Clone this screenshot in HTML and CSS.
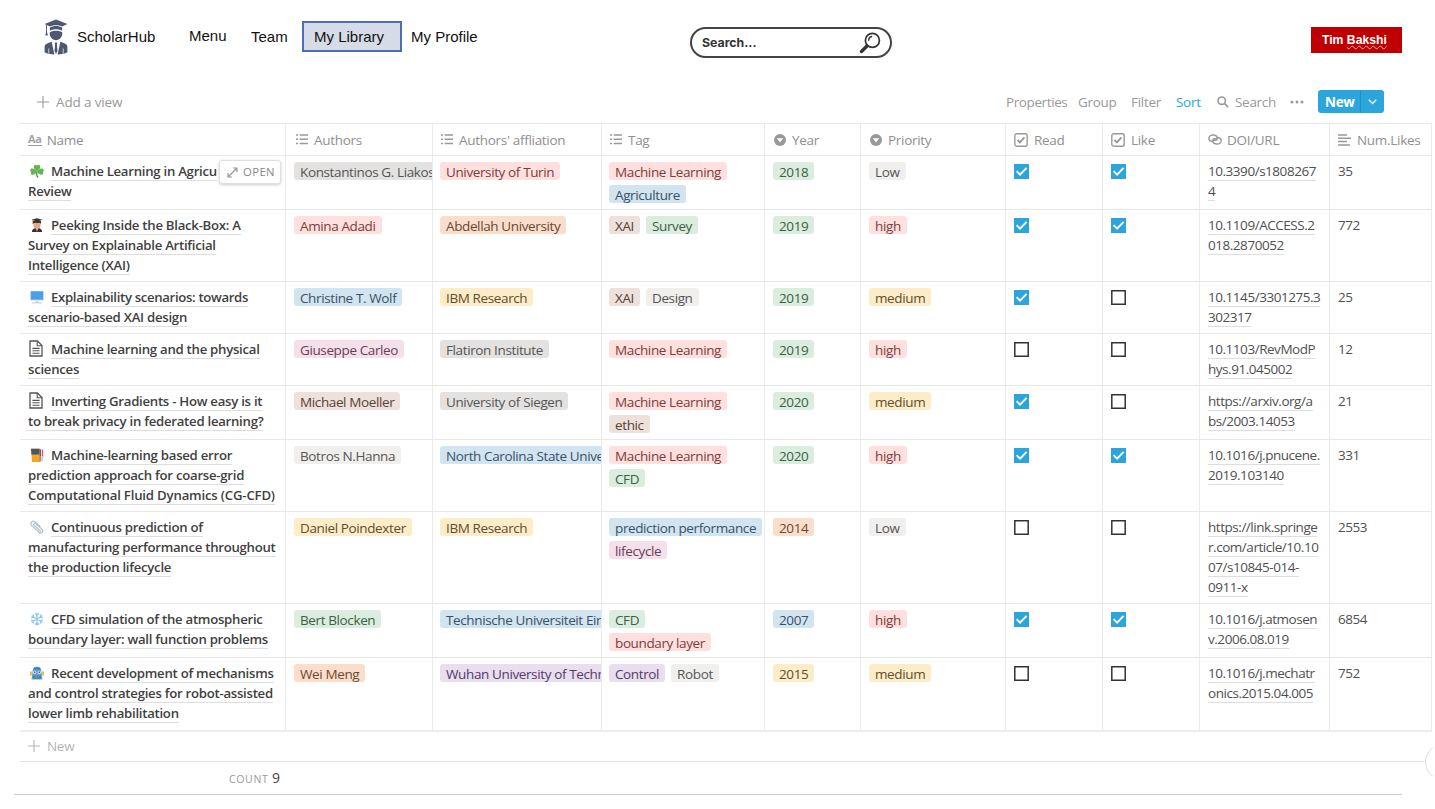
FILE: index.html
```html
<!DOCTYPE html>
<html lang="en">
<head>
<meta charset="utf-8">
<title>ScholarHub - My Library</title>
<link rel="stylesheet" href="styles.css">
</head>
<body>
<svg class="defs" width="0" height="0">
  <symbol id="list" viewBox="0 0 12 11"><path d="M0 1h2M0 5.3h2M0 9.6h2M3.6 1H12M3.6 5.3H12M3.6 9.6H12" stroke="currentColor" stroke-width="1.5" fill="none"/></symbol>
  <symbol id="select" viewBox="0 0 12 12"><circle cx="6" cy="6" r="6" fill="currentColor"/><path d="M2.8 4.2h6.4L6 8.600z" fill="#fff"/></symbol>
  <symbol id="check" viewBox="0 0 14 14"><rect x=".8" y=".8" width="12.4" height="12.4" rx="2" fill="none" stroke="currentColor" stroke-width="1.4"/><path d="M3.6 7l2.3 2.3 4.5-5" fill="none" stroke="currentColor" stroke-width="1.9"/></symbol>
  <symbol id="on" viewBox="0 0 15 15"><path d="M0 0h15v15H0z" fill="#2ca5dc"/><path d="M2.600 7.200l3.500 3.500 6.500-6.900" fill="none" stroke="#fff" stroke-width="1.9"/></symbol>
  <symbol id="off" viewBox="0 0 15 15"><path d="M.8.8h13.400v13.400H.8z" fill="#fff" stroke="#333" stroke-width="1.5"/></symbol>
  <symbol id="plus" viewBox="0 0 12 12"><path d="M6 0v12M0 6h12" stroke="currentColor" stroke-width="1.1"/></symbol>
  <symbol id="doc" viewBox="0 0 14 17"><path d="M1 1h7.400L13 5.600V16H1z" fill="#fff" stroke="#555" stroke-width="1.3"/><path d="M8.200 1v4.800H13M3.400 8.400h7.200M3.400 10.800h7.200M3.400 13.200h7.200" fill="none" stroke="#555" stroke-width="1.1"/></symbol>
</svg>

<header class="top">
  <div class="brand">
    <svg class="logo" viewBox="0 0 24 36" fill="#4d5870"><path d="M12 .5l11.500 4.600L18 7.400c-3.500-1.700-8.500-1.700-12 0L.5 5.100z"/><path d="M5.800 8.500c3.500-2.100 8.900-2.100 12.400 0v3.200c-3.500-2-8.900-2-12.400 0z"/><path d="M2.100 5.800l.9.400V13l.9 3.500H1.300L2.100 13zM5.800 13.200c3.500-2 8.900-2 12.400 0 .7 4-2.400 8-6.200 8s-6.900-4-6.200-8z"/><path d="M7.600 22.600L10.400 35.500C6.400 35.300 3 34.600.6 33.200V28c0-3 3.400-3.600 7-5.400zM16.400 22.600L13.600 35.500c4-.2 7.400-.9 9.800-2.300V28c0-3-3.400-3.600-7-5.400zM10.700 23.600h2.600l-.4 2 .6 6.500-1.500 3-1.500-3 .6-6.500z"/><path d="M4.800 29.500v5M19.200 29.500v5" stroke="#fff" stroke-width=".7"/></svg>
    <span>ScholarHub</span>
  </div>
  <nav class="nav">
    <a class="menu">Menu</a><a class="team">Team</a><a class="current">My Library</a><a>My Profile</a>
  </nav>
  <div class="search">
    <span>Search...</span>
    <svg width="22" height="22" viewBox="0 0 22 22" fill="none" stroke="#333" stroke-linecap="round"><circle cx="13.400" cy="8.400" r="7" stroke-width="1.700"/><path d="M8 14l-5.500 5.500" stroke-width="3.400"/><path d="M9.700 8.300c0-2 1.300-3.500 3-3.800" stroke-width="1.300"/></svg>
  </div>
  <div class="user">Tim <span>Bakshi</span></div>
</header>

<section class="toolbar">
  <div class="add"><svg width="12" height="12"><use href="#plus"/></svg><span>Add a view</span></div>
  <div class="tools">
    <span class="t-prop">Properties</span><span class="t-group">Group</span><span class="t-filter">Filter</span><span class="t-sort">Sort</span>
    <svg class="t-glass" width="12" height="12" viewBox="0 0 12 12" fill="none" stroke="#999" stroke-width="1.600"><circle cx="4.700" cy="4.700" r="3.700"/><path d="M7.400 7.400l3.700 3.700"/></svg>
    <span class="t-search">Search</span>
    <svg class="t-dots" width="14" height="4" fill="#999"><circle cx="2" cy="2" r="1.500"/><circle cx="7" cy="2" r="1.500"/><circle cx="12" cy="2" r="1.500"/></svg>
    <div class="new"><b>New</b><i><svg width="9" height="6" viewBox="0 0 9 6" fill="none" stroke="#fff" stroke-width="1.300"><path d="M.8.8l3.700 3.700L8.200.8"/></svg></i></div>
  </div>
</section>

<main class="table">
  <div class="row head">
    <div><b class="aa">Aa</b><span>Name</span></div>
    <div><svg class="i-list"><use href="#list"/></svg><span>Authors</span></div>
    <div><svg class="i-list"><use href="#list"/></svg><span>Authors' affliation</span></div>
    <div><svg class="i-list"><use href="#list"/></svg><span>Tag</span></div>
    <div><svg class="i-sel"><use href="#select"/></svg><span>Year</span></div>
    <div><svg class="i-sel"><use href="#select"/></svg><span>Priority</span></div>
    <div><svg class="i-chk"><use href="#check"/></svg><span>Read</span></div>
    <div><svg class="i-chk"><use href="#check"/></svg><span>Like</span></div>
    <div><svg class="i-link" viewBox="0 0 14 11" fill="none" stroke="currentColor" stroke-width="1.500"><path d="M5 7.400C2.500 7.400.9 6 .9 4.300S2.500 1 4.900 1s4.200 1.300 4.200 3c0 1.300-1 2.300-2.200 2.300S5 5.800 5.200 4.800"/><path d="M9 3.600c2.500 0 4.100 1.400 4.100 3.100S11.500 10 9.100 10s-4.200-1.300-4.200-3c0-1.300 1-2.300 2.200-2.300S9 5.200 8.800 6.200"/></svg><span>DOI/URL</span></div>
    <div><svg class="i-text" viewBox="0 0 13 12" stroke="currentColor" stroke-width="1.500"><path d="M0 1h9M0 4.300h13M0 7.600h9M0 10.900h12"/></svg><span>Num.Likes</span></div>
  </div>

  <div class="row h54">
    <div class="name"><svg class="emo" viewBox="0 0 14 14"><path d="M7 7c-.8 3-.3 5 1 6.500" stroke="#4c9a3c" stroke-width="1.400" fill="none"/><g fill="#63b64d"><path d="M7 7C4.500 5.500 3 3.500 4 1.800 5 .2 6.500.6 7 1.600 7.500.6 9 .2 10 1.800 11 3.500 9.500 5.500 7 7z"/><path d="M7 7C5 5 2.500 3.800 1 5c-1.500 1.200-.9 2.400.2 2.900-.7 1-.7 2.200.8 2.800C4 11.400 6 9.500 7 7zM7 7c2-2 4.500-3.200 6-2 1.500 1.200.9 2.400-.2 2.900.7 1 .7 2.200-.8 2.800C10 11.400 8 9.500 7 7z"/></g></svg><u>Machine Learning in Agricu</u><br><u>Review</u><span class="open"><svg width="11" height="11" viewBox="0 0 11 11" fill="none" stroke="#999" stroke-width="1.200"><path d="M1 10L10 1M6 1h4v4M1 6v4h4"/></svg>OPEN</span></div>
    <div class="tags"><em class="gray">Konstantinos G. Liakos</em></div>
    <div class="tags"><em class="red">University of Turin</em></div>
    <div class="tags stack"><em class="red">Machine Learning</em><em class="blue">Agriculture</em></div>
    <div class="tags"><em class="green">2018</em></div>
    <div class="tags"><em class="light">Low</em></div>
    <div class="box"><svg><use href="#on"/></svg></div><div class="box"><svg><use href="#on"/></svg></div>
    <div class="url"><u>10.3390/s1808267</u><br><u>4</u></div><div class="num">35</div>
  </div>
  <div class="row h72">
    <div class="name"><svg class="emo" viewBox="0 0 14 14"><path d="M2 14c0-3 2-4 5-4s5 1 5 4z" fill="#333"/><path d="M5.700 9h2.600l-.3 3L7 13l-1-1z" fill="#e8d5c8"/><rect x="3.500" y="3.500" width="7" height="7" rx="3" fill="#dfad8b"/><path d="M3 6V3h8v3L10 5H4z" fill="#4b3326"/><path d="M1.500 1.800L7 .3l5.500 1.500L7 3.800z" fill="#333"/><path d="M7 11v3" stroke="#c33"/><path d="M2.500 2v4" stroke="#d8a02c" stroke-width=".7"/></svg><u>Peeking Inside the Black-Box: A</u><br><u>Survey on Explainable Artificial</u><br><u>Intelligence (XAI)</u></div>
    <div class="tags"><em class="red">Amina Adadi</em></div>
    <div class="tags"><em class="orange">Abdellah University</em></div>
    <div class="tags"><em class="brown">XAI</em><em class="green">Survey</em></div>
    <div class="tags"><em class="green">2019</em></div>
    <div class="tags"><em class="red">high</em></div>
    <div class="box"><svg><use href="#on"/></svg></div><div class="box"><svg><use href="#on"/></svg></div>
    <div class="url"><u>10.1109/ACCESS.2</u><br><u>018.2870052</u></div><div class="num">772</div>
  </div>
  <div class="row h52">
    <div class="name"><svg class="emo" viewBox="0 0 14 14"><rect x=".2" y=".8" width="13.600" height="10" rx="1" fill="#d5e3ee"/><path d="M.8 1.300h12.400v8.400H.8z" fill="#4c9fe6"/><path d="M5.500 11h3v1.200H12V13.500H2v-1.300h3.500z" fill="#cbd6df"/></svg><u class="tight">Explainability scenarios: towards</u><br><u>scenario-based XAI design</u></div>
    <div class="tags"><em class="blue">Christine T. Wolf</em></div>
    <div class="tags"><em class="yellow">IBM Research</em></div>
    <div class="tags"><em class="brown">XAI</em><em class="light">Design</em></div>
    <div class="tags"><em class="green">2019</em></div>
    <div class="tags"><em class="yellow">medium</em></div>
    <div class="box"><svg><use href="#on"/></svg></div><div class="box"><svg><use href="#off"/></svg></div>
    <div class="url"><u>10.1145/3301275.3</u><br><u>302317</u></div><div class="num">25</div>
  </div>
  <div class="row h52">
    <div class="name"><svg class="doc"><use href="#doc"/></svg><u>Machine learning and the physical</u><br><u>sciences</u></div>
    <div class="tags"><em class="pink">Giuseppe Carleo</em></div>
    <div class="tags"><em class="gray">Flatiron Institute</em></div>
    <div class="tags"><em class="red">Machine Learning</em></div>
    <div class="tags"><em class="green">2019</em></div>
    <div class="tags"><em class="red">high</em></div>
    <div class="box"><svg><use href="#off"/></svg></div><div class="box"><svg><use href="#off"/></svg></div>
    <div class="url"><u>10.1103/RevModP</u><br><u>hys.91.045002</u></div><div class="num">12</div>
  </div>
  <div class="row h54">
    <div class="name"><svg class="doc"><use href="#doc"/></svg><u>Inverting Gradients - How easy is it</u><br><u>to break privacy in federated learning?</u></div>
    <div class="tags"><em class="brown">Michael Moeller</em></div>
    <div class="tags"><em class="gray">University of Siegen</em></div>
    <div class="tags stack"><em class="red">Machine Learning</em><em class="brown">ethic</em></div>
    <div class="tags"><em class="green">2020</em></div>
    <div class="tags"><em class="yellow">medium</em></div>
    <div class="box"><svg><use href="#on"/></svg></div><div class="box"><svg><use href="#off"/></svg></div>
    <div class="url"><u>https://arxiv.org/a</u><br><u>bs/2003.14053</u></div><div class="num">21</div>
  </div>
  <div class="row h72">
    <div class="name"><svg class="emo" viewBox="0 0 14 14"><path d="M1 .8h8.500V14H2z" fill="#f5a524"/><path d="M1 .8h8.500V6.500H1.500z" fill="#4b5563"/><path d="M9.500.8l1.500.8V13l-1.500 1z" fill="#8b5a2b"/><path d="M12.500 1.500v8" stroke="#d75a75" stroke-width="1.400"/><path d="M10.500 8h2.500v5h-2.500z" fill="#c9d3df"/></svg><u>Machine-learning based error</u><br><u>prediction approach for coarse-grid</u><br><u class="loose">Computational Fluid Dynamics (CG-CFD)</u></div>
    <div class="tags"><em class="light">Botros N.Hanna</em></div>
    <div class="tags"><em class="blue">North Carolina State Unive</em></div>
    <div class="tags stack"><em class="red">Machine Learning</em><em class="green">CFD</em></div>
    <div class="tags"><em class="green">2020</em></div>
    <div class="tags"><em class="red">high</em></div>
    <div class="box"><svg><use href="#on"/></svg></div><div class="box"><svg><use href="#on"/></svg></div>
    <div class="url"><u>10.1016/j.pnucene.</u><br><u>2019.103140</u></div><div class="num">331</div>
  </div>
  <div class="row h92">
    <div class="name"><svg class="emo" viewBox="0 0 14 14"><path d="M11 11.500L4 5.200c-1-1 .4-2.600 1.500-1.600l6.500 5.800c2 2-.7 5-2.800 3.100L1.700 5.600C-.5 3.300 2.600-.2 5 1.900l5.500 5" fill="none" stroke="#b3bfc9" stroke-width="1.200"/></svg><u>Continuous prediction of</u><br><u>manufacturing performance throughout</u><br><u>the production lifecycle</u></div>
    <div class="tags"><em class="yellow">Daniel Poindexter</em></div>
    <div class="tags"><em class="yellow">IBM Research</em></div>
    <div class="tags"><em class="blue">prediction performance</em><em class="pink">lifecycle</em></div>
    <div class="tags"><em class="orange">2014</em></div>
    <div class="tags"><em class="light">Low</em></div>
    <div class="box"><svg><use href="#off"/></svg></div><div class="box"><svg><use href="#off"/></svg></div>
    <div class="url"><u>https://link.springe</u><br><u>r.com/article/10.10</u><br><u>07/s10845-014-</u><br><u>0911-x</u></div><div class="num">2553</div>
  </div>
  <div class="row h54">
    <div class="name"><svg class="emo" viewBox="0 0 14 14" fill="none" stroke="#93c7ee" stroke-width="1.200"><path d="M7 .5v13M1.400 3.700l11.200 6.600M1.400 10.300l11.200-6.600M5 1.500l2 2 2-2M5 12.500l2-2 2 2M1 6l2.800-.8L3 2.400M13 6l-2.800-.8.800-2.800M1 8l2.800.8-.8 2.800M13 8l-2.800.8.800 2.800"/></svg><u>CFD simulation of the atmospheric</u><br><u>boundary layer: wall function problems</u></div>
    <div class="tags"><em class="green">Bert Blocken</em></div>
    <div class="tags"><em class="blue">Technische Universiteit Ein</em></div>
    <div class="tags stack"><em class="green">CFD</em><em class="red">boundary layer</em></div>
    <div class="tags"><em class="blue">2007</em></div>
    <div class="tags"><em class="red">high</em></div>
    <div class="box"><svg><use href="#on"/></svg></div><div class="box"><svg><use href="#on"/></svg></div>
    <div class="url"><u>10.1016/j.atmosen</u><br><u>v.2006.08.019</u></div><div class="num">6854</div>
  </div>
  <div class="row last">
    <div class="name"><svg class="emo" viewBox="0 0 14 14"><path d="M2.500 6c0-7 9-7 9 0l1 7.500h-11z" fill="#55a7e4"/><path d="M4 1.500h6l.7 2H3.300z" fill="#3b78b8"/><path d="M0 5.500h1.800v4H0zM12.200 5.500H14v4h-1.800z" fill="#e8b33b"/><circle cx="4.700" cy="6.200" r="1.500" fill="#fff"/><circle cx="9.300" cy="6.200" r="1.500" fill="#fff"/><circle cx="4.700" cy="6.200" r=".9" fill="#c33"/><circle cx="9.300" cy="6.200" r=".9" fill="#c33"/><path d="M3.500 9.800h7v2.500h-7z" fill="#31475f"/><path d="M4.200 11h5.600" stroke="#dce8f0" stroke-width=".8"/></svg><u>Recent development of mechanisms</u><br><u>and control strategies for robot-assisted</u><br><u>lower limb rehabilitation</u></div>
    <div class="tags"><em class="orange">Wei Meng</em></div>
    <div class="tags"><em class="purple">Wuhan University of Techn</em></div>
    <div class="tags"><em class="purple">Control</em><em class="light">Robot</em></div>
    <div class="tags"><em class="yellow">2015</em></div>
    <div class="tags"><em class="yellow">medium</em></div>
    <div class="box"><svg><use href="#off"/></svg></div><div class="box"><svg><use href="#off"/></svg></div>
    <div class="url"><u>10.1016/j.mechatr</u><br><u>onics.2015.04.005</u></div><div class="num">752</div>
  </div>
  <div class="newrow"><svg width="12" height="12"><use href="#plus"/></svg><span>New</span></div>
  <div class="count">COUNT <b>9</b></div>
</main>
<div class="rule"></div>
<div class="help"><i></i></div>
</body>
</html>
```

FILE: styles.css
```css
* { box-sizing: border-box; }
body { margin: 0; width: 1435px; height: 809px; overflow: hidden; position: relative; background: #fff; font-family: "Open Sans", "Noto Sans", sans-serif; font-size: 13.5px; color: #505050; }
.defs { position: absolute; }
svg { display: block; flex: none; }
.top { display: flex; height: 84px; align-items: flex-start; padding-left: 44px; font: 15px/20px "Liberation Sans", Arial, sans-serif; color: #111; }
.brand { display: flex; padding-top: 19px; width: 145px; gap: 9px; }
.brand span { padding-top: 8px; }
.logo { width: 24px; height: 36px; }
.nav { display: flex; padding-top: 21px; width: 501px; }
.nav a { padding: 6px 0; height: 31px; line-height: 20px; }
.nav .menu { width: 62px; padding-top: 5px; }
.nav .team { width: 51px; }
.nav .current { width: 100px; margin-right: 9px; padding: 4px 10px; border: 2px solid #4a6fb3; background: #d6dce7; }
.search { width: 202px; height: 31px; margin-top: 27px; border: 2px solid #444; border-radius: 16px; display: flex; align-items: center; justify-content: space-between; padding: 0 9px 0 10px; font: 700 12.3px "Inter", sans-serif; color: #333; }
.user { margin: 27px 0 0 419px; width: 91px; height: 26px; background: #c00000; color: #fff; font-weight: 700; font-size: 12.2px; line-height: 27px; padding-left: 11px; }
.user span { text-decoration: underline wavy #eaa 1px; text-underline-offset: 1px; text-decoration-skip-ink: none; }
.toolbar { height: 39px; display: flex; justify-content: space-between; color: #999; line-height: 20px; padding-left: 37px; letter-spacing: -.3px; }
.add { display: flex; gap: 7px; padding-top: 8px; letter-spacing: -.15px; }
.add svg { margin-top: 4px; }
.tools { display: flex; width: 429px; padding-top: 8px; }
.t-prop { width: 72px; letter-spacing: -.4px; } .t-group { width: 53px; } .t-filter { width: 45px; }
.t-sort { width: 41px; color: #2ca5dc; }
.t-glass { margin: 4px 6px 0 0; }
.t-search { width: 55px; }
.t-dots { margin: 8px 14px 0 0; }
.new { display: flex; width: 66px; height: 23px; margin-top: -2px; border-radius: 3px; background: #2ca5dc; color: #fff; }
.new b { width: 43px; padding-left: 7px; line-height: 25px; border-right: 1px solid #2590c2; }
.new i { display: flex; align-items: center; padding-left: 7px; }
.table { margin-left: 20px; width: 1412px; border-top: 1px solid #e6e6e6; }
.row { display: grid; grid-template-columns: 266px 147px 169px 163px 96px 145px 97px 97px 130px 102px; border-bottom: 1px solid #e8e8e8; }
.row > div { border-right: 1px solid #ebebeb; overflow: hidden; padding: 5px 0 0 8px; }
.row > div:nth-child(3), .row > div:nth-child(4) { padding-left: 7px; }
.head { height: 32px; color: #8f8f8f; letter-spacing: -.3px; }
.row.head > div { display: flex; line-height: 20px; padding-top: 6px; }
.head svg { color: #999; }
.aa { font-size: 11px; line-height: 11px; height: 13px; margin: 3px 5px 0 0; color: #a4a4a4; border-bottom: 1px solid #999; }
.i-list { width: 12px; height: 11px; margin: 4px 6px 0 2px; }
.head > div:nth-child(3) .i-list, .head > div:nth-child(4) .i-list { margin-left: 1px; }
.i-sel { width: 12px; height: 12px; margin: 4px 6px 0 1px; }
.i-chk { width: 14px; height: 14px; margin: 3px 6px 0 0; }
.i-link { width: 14px; height: 11px; margin: 4px 5px 0 0; }
.i-text { width: 13px; height: 12px; margin: 4px 6px 0 0; }
.h52 { height: 52px; } .h54 { height: 54px; } .h72 { height: 72px; } .h92 { height: 92px; }
.last { height: 74px; border-bottom: 2px solid #ededed; }
.name { position: relative; line-height: 20px; font-weight: 600; font-size: 13.2px; letter-spacing: -.27px; color: #3f3f3f; white-space: nowrap; }
.tight { letter-spacing: -.34px; } .loose { letter-spacing: -.19px; }
.row > .name { overflow: visible; }
u { text-decoration: none; border-bottom: 1px solid #dedede; }
.emo, .doc { display: inline-block; vertical-align: -2px; width: 14px; height: 14px; margin: 0 7px 0 2px; }
.doc { width: 14px; height: 17px; margin: -2px 8px -2px 1px; vertical-align: -1px; }
.open { position: absolute; left: 199px; top: 4px; width: 62px; height: 24px; display: flex; align-items: center; gap: 5px; padding-left: 7px; background: #fff; border: 1px solid #e0e0e0; border-radius: 3px; box-shadow: 0 1px 3px #0003; font-size: 11.3px; font-weight: 400; letter-spacing: .4px; color: #888; }
.row > .tags { display: flex; flex-wrap: wrap; align-content: flex-start; gap: 5.400px 6px; padding-top: 6px; }
.row > .stack { padding-right: 30px; }
em { font-style: normal; height: 18px; line-height: 20px; padding: 0 6px; border-radius: 3px; white-space: nowrap; overflow: hidden; flex: none; letter-spacing: -.38px; }
.gray { background: #e3e2e1; color: #555; } .light { background: #f0efee; color: #555; }
.red { background: #ffe0de; color: #7c3c3c; } .green { background: #dbedde; color: #3d5f45; }
.blue { background: #d2e4ef; color: #37526a; } .orange { background: #fadecb; color: #6b4832; }
.brown { background: #eee0da; color: #594038; } .yellow { background: #fdecc8; color: #5f4e2f; }
.pink { background: #f5e0e9; color: #673e58; } .purple { background: #e8deee; color: #533b6a; }
.box svg { width: 15px; height: 15px; margin-top: 3px; }
.url, .num { line-height: 20px; white-space: nowrap; letter-spacing: -.46px; }
.newrow { display: flex; gap: 7px; height: 30px; padding: 4px 8px; border-bottom: 1px solid #e4e4e4; line-height: 20px; color: #b5b5b5; letter-spacing: -.3px; }
.newrow svg { margin-top: 4px; }
.count { height: 32px; width: 260px; text-align: right; line-height: 31px; font-size: 10.5px; letter-spacing: .7px; color: #999; }
.count b { font-weight: 400; font-size: 14px; letter-spacing: 0; color: #444; }
.rule { margin-left: 14px; width: 1388px; border-top: 1px solid #ccc; }
.help { position: absolute; left: 1425px; top: 744px; width: 8px; height: 36px; overflow: hidden; }
.help i { display: block; width: 36px; height: 36px; border: 1px solid #ddd; border-radius: 50%; background: #fff; }
```
